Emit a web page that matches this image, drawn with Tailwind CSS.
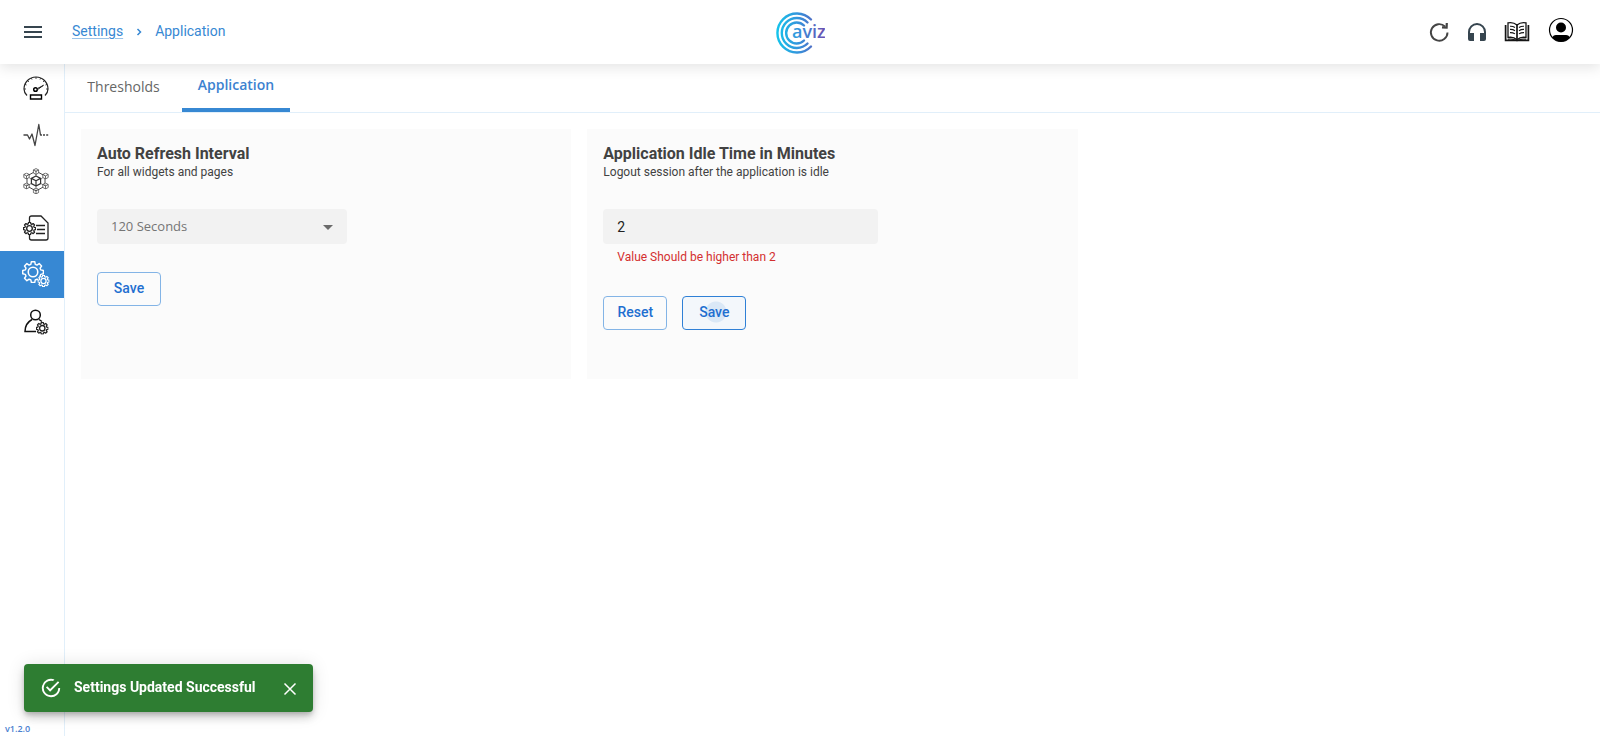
<!DOCTYPE html>
<html lang="en">
<head>
<meta charset="utf-8">
<meta name="viewport" content="width=device-width, initial-scale=1">
<title>Settings - Application</title>
<script src="https://cdn.jsdelivr.net/npm/@tailwindcss/browser@4"></script>
</head>
<body class="flex min-h-screen flex-col bg-white font-['Roboto',sans-serif] text-[#424242]">
<svg class="hidden" aria-hidden="true">
  <symbol id="gear" viewBox="0 0 24 24">
    <path fill="none" stroke="currentColor" stroke-linejoin="round" d="M10 1.500h4l.6 3 2 .9 2.600-1.700 2.800 2.800-1.700 2.600.8 2 3 .6v4l-3 .6-.8 2 1.700 2.600-2.800 2.800-2.600-1.700-2 .8-.6 3h-4l-.6-3-2-.8-2.600 1.700-2.800-2.800 1.700-2.600-.8-2-3-.6v-4l3-.6.8-2-1.700-2.600 2.800-2.800 2.600 1.700 2-.9z" transform="translate(.9 -.6) scale(.93)"/>
    <circle cx="12" cy="12" r="5.200" fill="none" stroke="currentColor"/>
  </symbol>
  <symbol id="cube" viewBox="0 0 6 6">
    <path fill="white" stroke="currentColor" stroke-width=".6" stroke-linejoin="round" d="M3 .5 5.300 1.700v2.600L3 5.500.7 4.300V1.700zM.7 1.700 3 2.900l2.300-1.200M3 2.900v2.600"/>
  </symbol>
</svg>

<header class="z-10 flex h-16 items-center bg-white px-6 shadow-[0_4px_12px_rgba(0,0,0,0.1)]">
  <div class="flex flex-1 items-center">
    <button type="button" aria-label="Toggle menu" class="text-[#36454f]">
      <svg class="h-3 w-[18px]" viewBox="0 0 18 12" fill="currentColor"><path d="M0 0h18v2H0zM0 5h18v2H0zM0 10h18v2H0z"/></svg>
    </button>
    <nav aria-label="Breadcrumb" class="ml-[30px] flex items-center pb-0.5 text-sm text-[#3788d3]">
      <a href="#settings" class="underline decoration-[#3788d3]/50 underline-offset-2">Settings</a>
      <svg class="mx-3 mt-0.5 size-2" viewBox="0 0 8 8" fill="none" stroke="currentColor" stroke-width="1.500"><path d="m2.500 1 3 3-3 3"/></svg>
      <a href="#application">Application</a>
    </nav>
  </div>
  <a href="#home" aria-label="Aviz home" class="pt-0.5">
    <svg class="h-11 w-[50px]" viewBox="0 0 50 44">
      <defs><linearGradient id="brand" gradientUnits="userSpaceOnUse" x1="0" y1="0" x2="50" y2="0"><stop offset="0" stop-color="#12c8ec"/><stop offset=".5" stop-color="#378fda"/><stop offset="1" stop-color="#6a4fb0"/></linearGradient></defs>
      <g fill="none" stroke="url(#brand)" stroke-width="2.400" stroke-linecap="round">
        <path d="M36 8.500A19.500 19.500 0 1 0 36 35.500"/>
        <path d="M32.500 11.500A15 15 0 1 0 32.500 32.500"/>
        <path d="M29 14.500A10.500 10.500 0 1 0 29 29.500"/>
      </g>
      <text x="17" y="27" fill="url(#brand)" font-family="Open Sans, sans-serif" font-weight="600" font-size="18">aviz</text>
    </svg>
  </a>
  <div class="flex flex-1 items-center justify-end text-[#36454f]">
    <button type="button" aria-label="Refresh" class="mr-4">
      <svg class="size-[22px]" viewBox="0 0 22 22" fill="none" stroke="#444" stroke-width="1.900"><path d="M19.500 11.500A8.300 8.300 0 1 1 17 5.500"/><path d="m18.800 2-.2 4.600-4.600-.2" stroke-width="2.200"/></svg>
    </button>
    <button type="button" aria-label="Support" class="mr-4">
      <svg class="size-[22px]" viewBox="0 0 22 22" fill="currentColor"><path d="M2 11a9 9 0 0 1 18 0v7a2 2 0 0 1-2 2h-4v-8h4v-1a7 7 0 0 0-14 0v1h4v8H4a2 2 0 0 1-2-2z"/></svg>
    </button>
    <button type="button" aria-label="Documentation" class="mr-[18px]">
      <svg class="h-[22px] w-[26px]" viewBox="0 0 26 22" fill="none" stroke="#151515" stroke-width="1.300"><path d="M13 4C10.500 1.800 7 1.200 4 1.800v14.700c3-.6 6.500 0 9 2.200 2.500-2.200 6-2.800 9-2.200V1.800C19 1.200 15.500 1.800 13 4z"/><path d="M13 4v14.500M1.600 4v15.300h22.800V4" stroke-width="1.700"/><path d="M4 18.200c4-.8 6 0 9 1.500 3-1.500 5-2.300 9-1.500M6 5.200c2-.1 3.500.3 5 1.300M6 8.400c2-.1 3.500.3 5 1.300M6 11.600c2-.1 3.500.3 5 1.300M20 5.200c-2-.1-3.500.3-5 1.300M20 8.400c-2-.1-3.500.3-5 1.300M20 11.600c-2-.1-3.500.3-5 1.300" stroke-width="1.100"/></svg>
    </button>
    <button type="button" aria-label="Account" class="mr-0.5 mb-1">
      <svg class="size-[26px]" viewBox="0 0 26 26"><defs><clipPath id="face"><circle cx="13" cy="13" r="11.500"/></clipPath></defs><circle cx="13" cy="10.500" r="5"/><path d="M4 26v-5q1-3 4-3h10q3 0 4 3v5z" clip-path="url(#face)"/><circle cx="13" cy="13" r="11.500" fill="none" stroke="#000" stroke-width="1.200"/></svg>
    </button>
  </div>
</header>

<div class="flex flex-1">
  <aside class="flex w-[65px] shrink-0 flex-col border-r border-[#e1effa]">
    <nav aria-label="Main" class="-mt-px flex flex-col text-[#222]">
      <a href="#dashboard" aria-label="Dashboard" class="flex h-[47px] items-center justify-center pt-0.5 pl-2">
        <svg class="size-[26px]" viewBox="0 0 26 26" fill="none" stroke="currentColor" stroke-width="1.200"><path d="M4 20.500C2 18.500 1 16.500 1 14a12 12 0 0 1 24 0c0 2.500-1 4.500-3 6.500"/><path d="M1 14h2M25 14h-2M4.500 5.500 6 7M21.500 5.500 20 7M13 2v2M2 9.300l1.600.7M24 9.300l-1.600.7M8.400 3l.6 1.600M17.600 3 17 4.600" stroke-width=".8"/><circle cx="12.500" cy="14.500" r="1.800" stroke="#000" stroke-width="1.500"/><path d="m14.300 13.600 6.200-3.300M14 15l6.500-4.700" stroke-width="1"/><path d="M7.500 20h11v4h-11z" stroke="#000" stroke-width="1.400"/></svg>
      </a>
      <a href="#health" aria-label="Health" class="flex h-[47px] items-center justify-center pt-0.5 pl-2">
        <svg class="size-[26px]" viewBox="0 0 26 26" fill="none" stroke="#444" stroke-width="1.300" stroke-linejoin="round"><path d="M.5 13H4.500l2 4 2.500-5 3 11.500 3.800-21L17.500 13h1.500"/><path d="M20 13h5.500" stroke-dasharray="2 1.200"/></svg>
      </a>
      <a href="#topology" aria-label="Topology" class="flex h-[47px] items-center justify-center pl-2">
        <svg class="size-[26px] text-[#333]" viewBox="0 0 26 26"><path d="M13 3 22 8v10l-9 5-9-5V8z" fill="none" stroke="currentColor" stroke-width=".9"/><path d="M13 3v6M4 18l5-3M22 18l-5-3M13 17v6M4 8l4 3M22 8l-4 3" stroke="currentColor" stroke-width=".6"/><use href="#cube" x="7" y="7" width="12" height="12"/><use href="#cube" x="9.500" y="0" width="7" height="7"/><use href="#cube" x="9.500" y="19.500" width="7" height="7"/><use href="#cube" x="0" y="4.500" width="7" height="7"/><use href="#cube" x="19" y="4.500" width="7" height="7"/><use href="#cube" x="0" y="14.500" width="7" height="7"/><use href="#cube" x="19" y="14.500" width="7" height="7"/></svg>
      </a>
      <a href="#config" aria-label="Configuration" class="flex h-[47px] items-center justify-center pl-2">
        <svg class="size-[26px]" viewBox="0 0 26 26" fill="none" stroke="currentColor" stroke-width="1.300"><path d="M6.500 7.500V3q0-2 2-2H18l7 7v15q0 2-2 2H8.500q-2 0-2-2v-4"/><path d="M13 10.500h9M14 14.500h8M13 18.500h9" stroke-width="1.700"/><use href="#gear" x="0" y="7" width="13" height="13" stroke-width="2.500"/></svg>
      </a>
      <a href="#settings" aria-label="Settings" aria-current="page" class="flex h-[47px] items-center justify-center bg-[#3788d3] pl-2 text-white">
        <svg class="size-7" viewBox="0 0 28 28"><use href="#gear" x="0" y="0" width="22" height="22" stroke-width="1.700"/><circle cx="21.500" cy="20" r="5.800" fill="#3788d3"/><use href="#gear" x="15.500" y="14" width="12" height="12" stroke-width="2.500"/></svg>
      </a>
      <a href="#users" aria-label="Users" class="flex h-[47px] items-center justify-center pl-2">
        <svg class="size-[26px]" viewBox="0 0 26 26" fill="none" stroke="#111" stroke-width="1.500"><circle cx="12.500" cy="6" r="4.800"/><path d="M9 10.500C4.500 13 2 17 2 22.500h11M16 10.500l3 2"/><use href="#gear" x="13" y="13" width="12.500" height="12.500" stroke-width="2.600"/></svg>
      </a>
    </nav>
    <p class="mt-auto pl-[5px] font-['Open_Sans',sans-serif] text-[9px] leading-[14px] font-semibold text-[#4a80d0]">v1.2.0</p>
  </aside>

  <main class="min-w-0 flex-1">
    <div role="tablist" class="flex h-[49px] border-b border-[#e1effa] text-sm">
      <button type="button" role="tab" aria-selected="false" class="w-[117px] border-b-4 border-transparent pt-0.5 font-['Open_Sans',sans-serif] text-[#666]">Thresholds</button>
      <button type="button" role="tab" aria-selected="true" class="w-[108px] border-b-4 border-[#3788d3] pb-0.5 font-['Open_Sans',sans-serif] font-semibold text-[#3c82d0]">Application</button>
    </div>

    <div class="grid grid-cols-3 gap-4 p-4">
      <section class="flex min-h-[250px] flex-col items-start bg-[#fbfbfb] p-4">
        <h2 class="text-base leading-[18px] font-bold">Auto Refresh Interval</h2>
        <p class="text-xs leading-[18px]"><label for="interval">For all widgets and pages</label></p>
        <div class="relative mt-7 w-[250px]">
          <select id="interval" class="h-[35px] w-full appearance-none rounded bg-[#f2f2f2] px-3.5 font-['Open_Sans',sans-serif] text-[13px] text-[#757575]"><option>120 Seconds</option></select>
          <svg class="pointer-events-none absolute top-4 right-3.5 h-[5px] w-2.5" viewBox="0 0 10 5" fill="#6b6b6b"><path d="M0 0h10L5 5z"/></svg>
        </div>
        <button type="button" class="mt-7 h-[34px] w-16 rounded border border-[#83b4e6] pb-0.5 text-sm font-medium text-[#1f6fd0]">Save</button>
      </section>

      <section class="flex min-h-[250px] flex-col items-start bg-[#fbfbfb] p-4">
        <h2 class="text-base leading-[18px] font-bold">Application Idle Time in Minutes</h2>
        <p class="text-xs leading-[18px]"><label for="idle">Logout session after the application is idle</label></p>
        <input id="idle" type="text" inputmode="numeric" value="2" aria-invalid="true" aria-describedby="idle-error" class="mt-7 h-[35px] w-[275px] rounded bg-[#f2f2f2] px-3.5 text-sm text-[#222]">
        <p id="idle-error" class="mt-[3px] px-3.5 text-xs leading-5 text-[#d32f2f]">Value Should be higher than 2</p>
        <div class="mt-[29px] flex gap-[15px]">
          <button type="button" class="h-[34px] w-16 rounded border border-[#83b4e6] pb-0.5 text-sm font-medium text-[#1f6fd0]">Reset</button>
          <button type="button" class="h-[34px] w-16 rounded border border-[#2f80d6] bg-[#f3f7fb] bg-[radial-gradient(circle_at_33px_15px,#dae8f6_10px,transparent_11px)] pb-0.5 text-sm font-medium text-[#1f6fd0]">Save</button>
        </div>
      </section>
    </div>
  </main>
</div>

<div role="alert" class="fixed bottom-6 left-6 z-20 flex h-12 w-[289px] items-center rounded bg-[#2e7d32] px-4 text-white shadow-[0_3px_5px_-1px_rgba(0,0,0,0.2),0_6px_10px_rgba(0,0,0,0.14),0_1px_18px_rgba(0,0,0,0.12)]">
  <svg class="size-[22px]" viewBox="0 0 24 24" fill="currentColor"><path d="M20 12a8 8 0 1 1-8-8c.760 0 1.500.110 2.200.310l1.570-1.570A10 10 0 1 0 22 12zM7.910 10.080 6.500 11.500 11 16 21 6l-1.410-1.420L11 13.170z"/></svg>
  <p class="ml-3 pb-0.5 text-sm font-bold">Settings Updated Successful</p>
  <button type="button" aria-label="Close" class="ml-auto pt-0.5">
    <svg class="size-3.5" viewBox="0 0 14 14" fill="none" stroke="currentColor" stroke-width="1.500"><path d="m1.500 1.500 11 11m0-11-11 11"/></svg>
  </button>
</div>
</body>
</html>
